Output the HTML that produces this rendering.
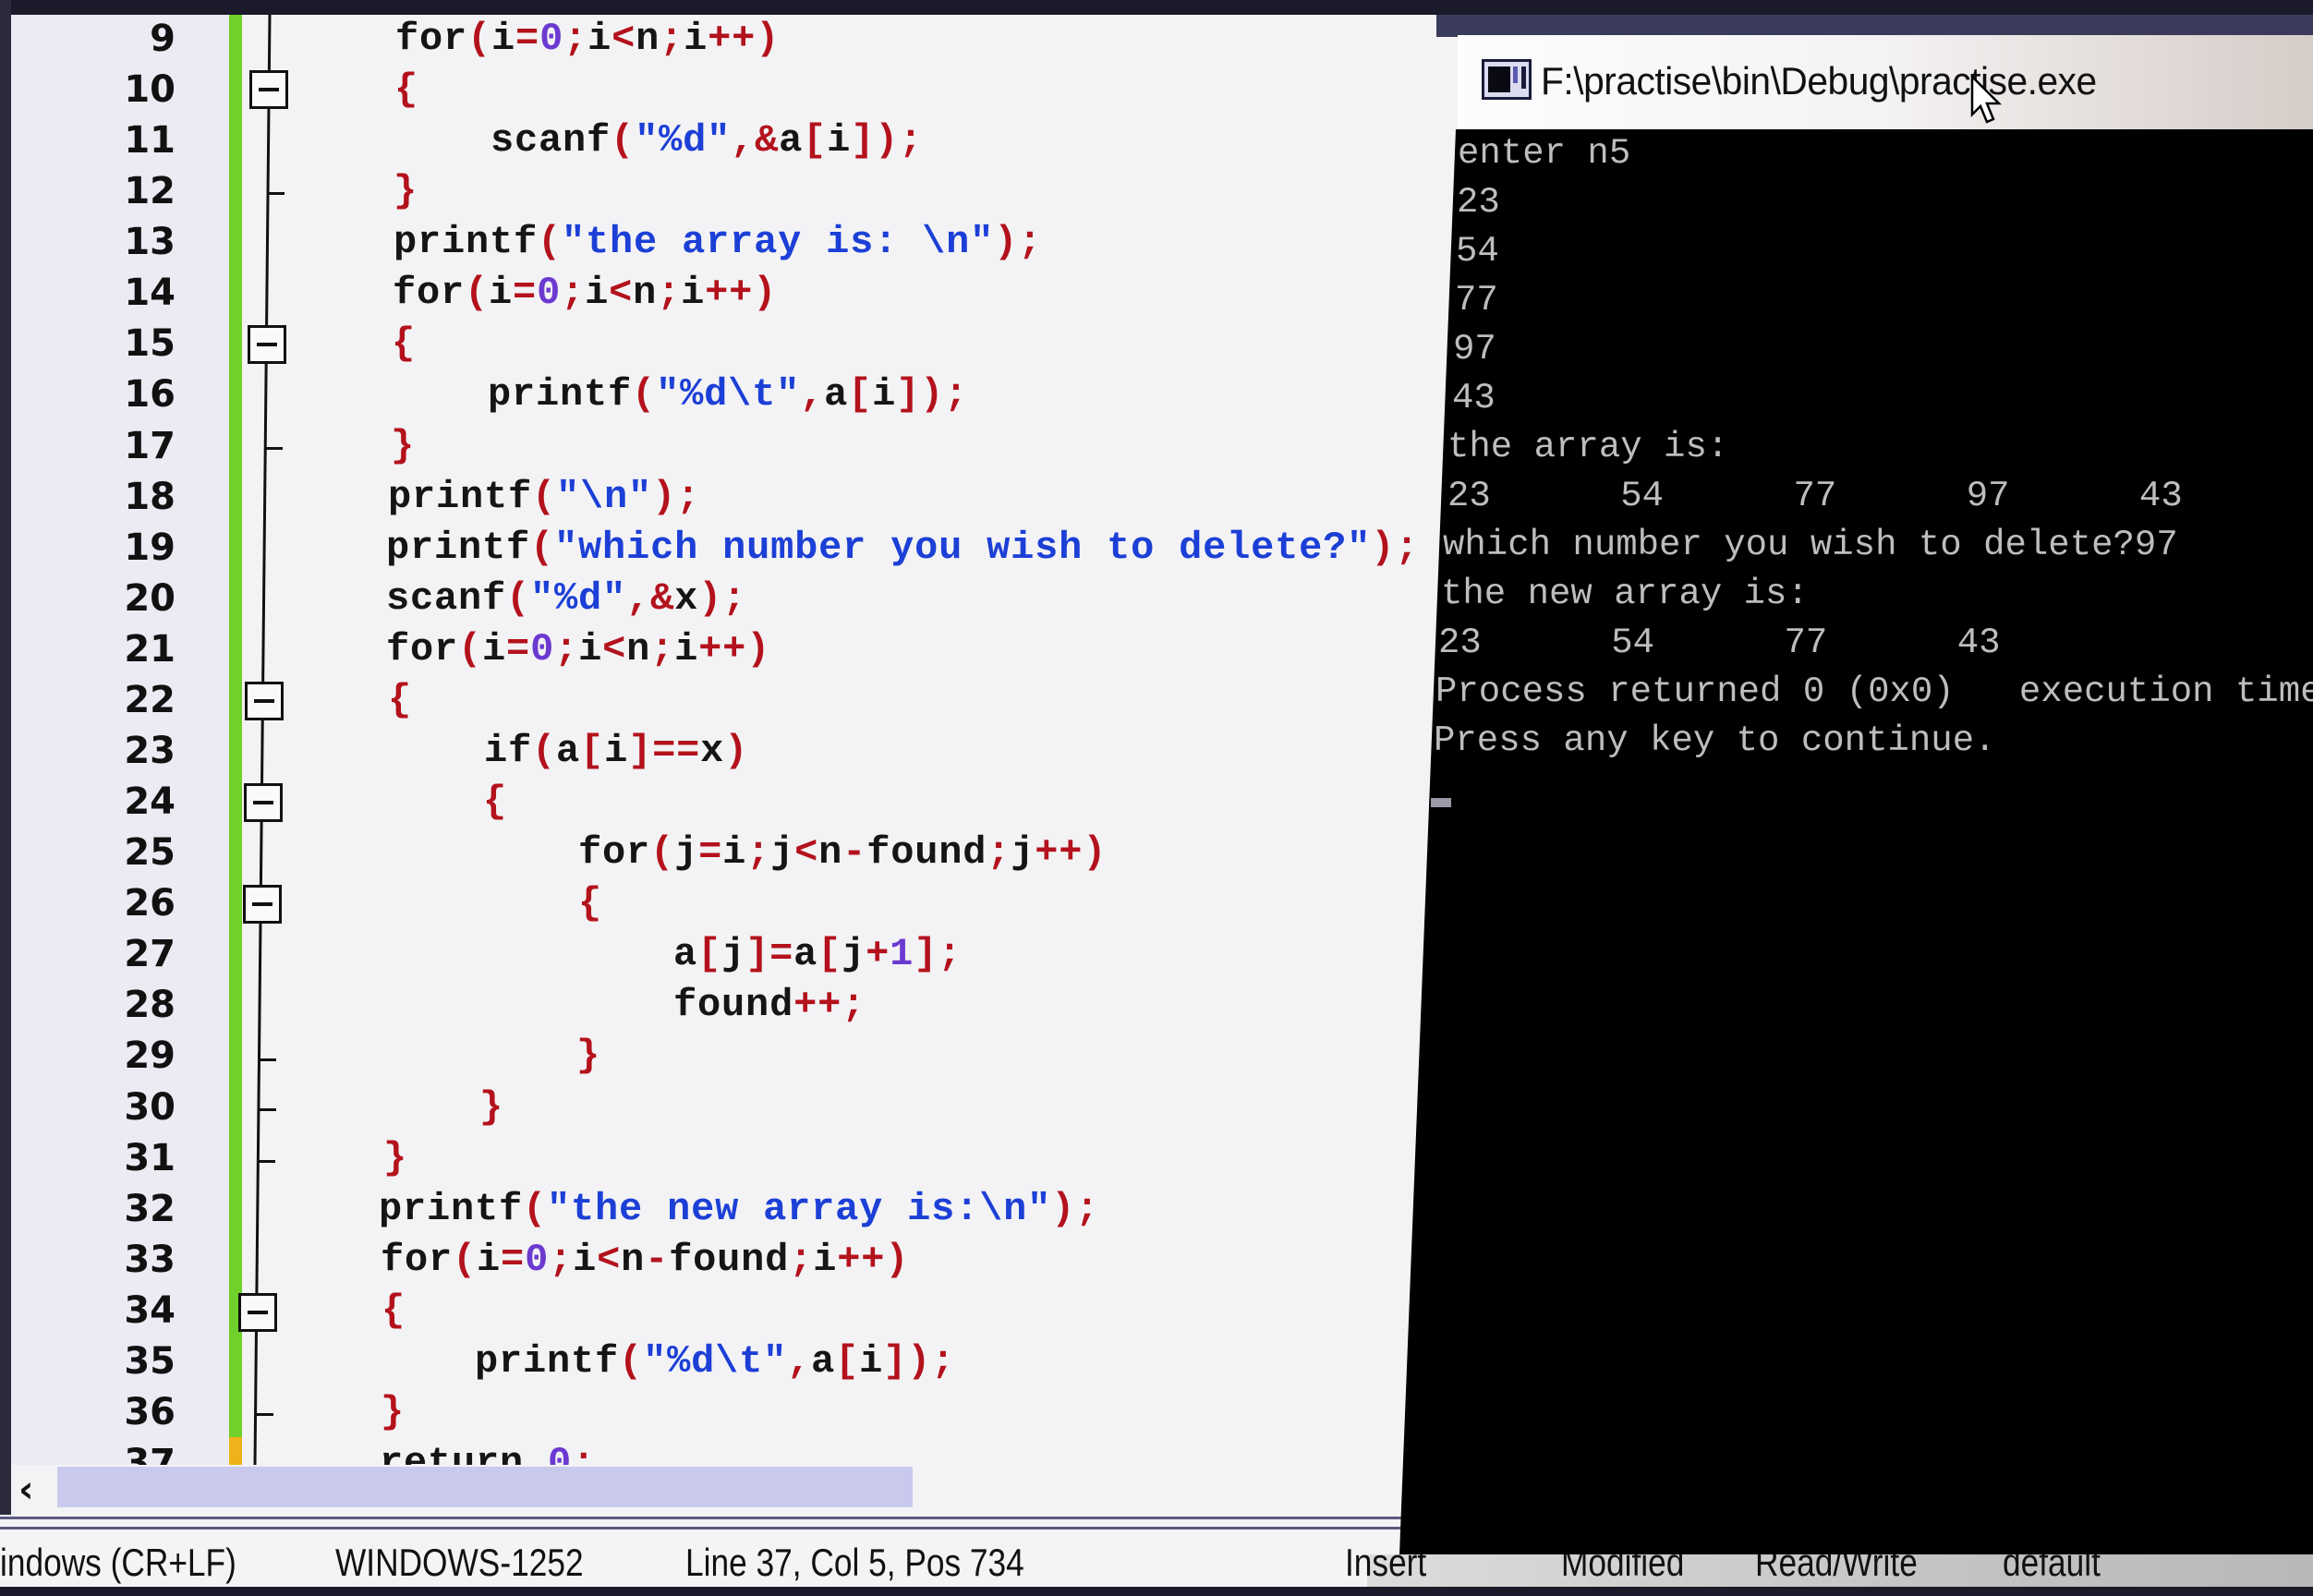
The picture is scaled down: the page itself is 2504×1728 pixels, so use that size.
<!DOCTYPE html>
<html><head><meta charset="utf-8">
<style>
*{margin:0;padding:0;box-sizing:border-box}
body{width:2504px;height:1728px;overflow:hidden;background:#f3f3f5;position:relative;font-family:"Liberation Mono",monospace}
.top{position:absolute;left:0;top:0;width:2504px;height:16px;background:#1a1a2a}
.leftb{position:absolute;left:0;top:0;width:12px;height:1640px;background:#2a2a3a}
.gutter{position:absolute;left:12px;top:16px;width:236px;height:1570px;background:#ecebf4}
.green{position:absolute;left:248px;top:16px;width:14px;height:1540px;background:#6fd12a}
.yellow{position:absolute;left:248px;top:1556px;width:14px;height:30px;background:#f0b21a}
.box{position:absolute;width:42px;height:42px;border:3px solid #111;background:#fafafa}
.box:after{content:"";position:absolute;left:7px;right:7px;top:16px;height:4px;background:#111}
.tick{position:absolute;width:18px;height:3px;background:#111}
.ln{position:absolute;left:60px;width:130px;text-align:right;font:bold 40px "DejaVu Sans",sans-serif;color:#111;line-height:55px}
.cl{position:absolute;white-space:pre;font-weight:bold;font-size:42px;letter-spacing:0.8px;line-height:55px;color:#151515}
.p{color:#b3121c}.s{color:#1c3fd6}.n{color:#6c3ad0}
.clip{position:absolute;left:0;top:16px;width:1540px;height:1570px;overflow:hidden}
.sb{position:absolute;left:62px;top:1588px;width:926px;height:44px;background:#c9c9ee}
.arrow{position:absolute;left:20px;top:1590px;font:bold 40px "DejaVu Sans",sans-serif;color:#111}
.hl{position:absolute;left:0;width:1520px;height:3px;background:#5a5a80}
.status{position:absolute;left:0;top:1658px;width:2504px;height:60px;background:#f4f4f6}
.status2{position:absolute;left:1480px;top:1683px;width:1024px;height:35px;background:linear-gradient(90deg,#dcdcdc,#c4c4c4 60%,#b8b8b8)}
.st{position:absolute;top:1668px;font:42px "Liberation Sans Narrow","Liberation Sans",sans-serif;color:#111;white-space:nowrap;transform:scaleX(0.84);transform-origin:left center}
.bot{position:absolute;left:0;top:1718px;width:2504px;height:10px;background:#1a1a2a}
.frame{position:absolute;left:1555px;top:16px;width:949px;height:24px;background:#3a3a5a}
.title{position:absolute;left:1578px;top:38px;width:926px;height:102px;background:linear-gradient(90deg,#fdfdfd,#f4f2f2 50%,#d6ccc8)}
.ttext{position:absolute;left:1668px;top:64px;font:42px "Liberation Sans Narrow","Liberation Sans",sans-serif;color:#111;letter-spacing:-0.5px;transform:scaleX(0.97);transform-origin:left center}
.con{position:absolute;left:1500px;top:140px;width:1004px;height:1543px;background:#000;clip-path:polygon(76px 0,1004px 0,1004px 1543px,15px 1543px)}
.ct{position:absolute;white-space:pre;font-size:39px;color:#bdbdbd;tab-size:8;-moz-tab-size:8;line-height:53px}
</style></head><body>
<div class="top"></div>
<div class="leftb"></div>
<div class="gutter"></div>
<div class="green"></div><div class="yellow"></div>
<svg style="position:absolute;left:0;top:0" width="400" height="1600"><line x1="292" y1="16" x2="276" y2="1586" stroke="#111" stroke-width="3"/></svg>
<div class="box" style="left:270px;top:76px"></div>
<div class="box" style="left:268px;top:352px"></div>
<div class="box" style="left:265px;top:738px"></div>
<div class="box" style="left:264px;top:848px"></div>
<div class="box" style="left:263px;top:958px"></div>
<div class="box" style="left:258px;top:1400px"></div>
<div class="tick" style="left:290px;top:208px"></div>
<div class="tick" style="left:288px;top:484px"></div>
<div class="tick" style="left:281px;top:1146px"></div>
<div class="tick" style="left:281px;top:1200px"></div>
<div class="tick" style="left:280px;top:1256px"></div>
<div class="tick" style="left:278px;top:1530px"></div>

<div class="clip">
<div class="ln" style="top:-1px">9</div>
<div class="ln" style="top:54px">10</div>
<div class="ln" style="top:109px">11</div>
<div class="ln" style="top:164px">12</div>
<div class="ln" style="top:219px">13</div>
<div class="ln" style="top:274px">14</div>
<div class="ln" style="top:329px">15</div>
<div class="ln" style="top:384px">16</div>
<div class="ln" style="top:440px">17</div>
<div class="ln" style="top:495px">18</div>
<div class="ln" style="top:550px">19</div>
<div class="ln" style="top:605px">20</div>
<div class="ln" style="top:660px">21</div>
<div class="ln" style="top:715px">22</div>
<div class="ln" style="top:770px">23</div>
<div class="ln" style="top:825px">24</div>
<div class="ln" style="top:880px">25</div>
<div class="ln" style="top:935px">26</div>
<div class="ln" style="top:990px">27</div>
<div class="ln" style="top:1045px">28</div>
<div class="ln" style="top:1100px">29</div>
<div class="ln" style="top:1156px">30</div>
<div class="ln" style="top:1211px">31</div>
<div class="ln" style="top:1266px">32</div>
<div class="ln" style="top:1321px">33</div>
<div class="ln" style="top:1376px">34</div>
<div class="ln" style="top:1431px">35</div>
<div class="ln" style="top:1486px">36</div>
<div class="ln" style="top:1541px">37</div>

<div class="cl" style="top:-1px;left:428px">for<span class="p">(</span>i<span class="p">=</span><span class="n">0</span><span class="p">;</span>i<span class="p">&lt;</span>n<span class="p">;</span>i<span class="p">++)</span></div>
<div class="cl" style="top:54px;left:427px"><span class="p">{</span></div>
<div class="cl" style="top:109px;left:427px">    scanf<span class="p">(</span><span class="s">"%d"</span><span class="p">,&amp;</span>a<span class="p">[</span>i<span class="p">]);</span></div>
<div class="cl" style="top:164px;left:426px"><span class="p">}</span></div>
<div class="cl" style="top:219px;left:426px">printf<span class="p">(</span><span class="s">"the array is: \n"</span><span class="p">);</span></div>
<div class="cl" style="top:274px;left:425px">for<span class="p">(</span>i<span class="p">=</span><span class="n">0</span><span class="p">;</span>i<span class="p">&lt;</span>n<span class="p">;</span>i<span class="p">++)</span></div>
<div class="cl" style="top:329px;left:424px"><span class="p">{</span></div>
<div class="cl" style="top:384px;left:424px">    printf<span class="p">(</span><span class="s">"%d\t"</span><span class="p">,</span>a<span class="p">[</span>i<span class="p">]);</span></div>
<div class="cl" style="top:440px;left:423px"><span class="p">}</span></div>
<div class="cl" style="top:495px;left:420px">printf<span class="p">(</span><span class="s">"\n"</span><span class="p">);</span></div>
<div class="cl" style="top:550px;left:418px">printf<span class="p">(</span><span class="s">"which number you wish to delete?"</span><span class="p">);</span></div>
<div class="cl" style="top:605px;left:418px">scanf<span class="p">(</span><span class="s">"%d"</span><span class="p">,&amp;</span>x<span class="p">);</span></div>
<div class="cl" style="top:660px;left:418px">for<span class="p">(</span>i<span class="p">=</span><span class="n">0</span><span class="p">;</span>i<span class="p">&lt;</span>n<span class="p">;</span>i<span class="p">++)</span></div>
<div class="cl" style="top:715px;left:420px"><span class="p">{</span></div>
<div class="cl" style="top:770px;left:420px">    if<span class="p">(</span>a<span class="p">[</span>i<span class="p">]==</span>x<span class="p">)</span></div>
<div class="cl" style="top:825px;left:419px">    <span class="p">{</span></div>
<div class="cl" style="top:880px;left:418px">        for<span class="p">(</span>j<span class="p">=</span>i<span class="p">;</span>j<span class="p">&lt;</span>n<span class="p">-</span>found<span class="p">;</span>j<span class="p">++)</span></div>
<div class="cl" style="top:935px;left:418px">        <span class="p">{</span></div>
<div class="cl" style="top:990px;left:417px">            a<span class="p">[</span>j<span class="p">]=</span>a<span class="p">[</span>j<span class="p">+</span><span class="n">1</span><span class="p">];</span></div>
<div class="cl" style="top:1045px;left:417px">            found<span class="p">++;</span></div>
<div class="cl" style="top:1100px;left:416px">        <span class="p">}</span></div>
<div class="cl" style="top:1156px;left:415px">    <span class="p">}</span></div>
<div class="cl" style="top:1211px;left:415px"><span class="p">}</span></div>
<div class="cl" style="top:1266px;left:410px">printf<span class="p">(</span><span class="s">"the new array is:\n"</span><span class="p">);</span></div>
<div class="cl" style="top:1321px;left:412px">for<span class="p">(</span>i<span class="p">=</span><span class="n">0</span><span class="p">;</span>i<span class="p">&lt;</span>n<span class="p">-</span>found<span class="p">;</span>i<span class="p">++)</span></div>
<div class="cl" style="top:1376px;left:413px"><span class="p">{</span></div>
<div class="cl" style="top:1431px;left:410px">    printf<span class="p">(</span><span class="s">"%d\t"</span><span class="p">,</span>a<span class="p">[</span>i<span class="p">]);</span></div>
<div class="cl" style="top:1486px;left:412px"><span class="p">}</span></div>
<div class="cl" style="top:1541px;left:411px">return <span class="n">0</span><span class="p">;</span></div>
</div>

<div class="sb"></div>
<div class="arrow">&lsaquo;</div>
<div class="hl" style="top:1642px"></div>
<div class="hl" style="top:1653px"></div>

<div class="status"></div>
<div class="status2"></div>
<div class="st" style="left:0">indows (CR+LF)</div>
<div class="st" style="left:363px">WINDOWS-1252</div>
<div class="st" style="left:742px">Line 37, Col 5, Pos 734</div>
<div class="st" style="left:1456px">Insert</div>
<div class="st" style="left:1690px">Modified</div>
<div class="st" style="left:1900px">Read/Write</div>
<div class="st" style="left:2168px">default</div>
<div class="bot"></div>

<div class="frame"></div>
<div class="title"></div>
<svg style="position:absolute;left:1604px;top:64px" width="54" height="44" viewBox="0 0 54 44">
<rect x="1.5" y="1.5" width="51" height="41" fill="#dcdcf0" stroke="#1a1a3a" stroke-width="3"/>
<rect x="7" y="8" width="24" height="28" fill="#0a0a14"/>
<rect x="34" y="8" width="5" height="18" fill="#5a5ab0"/>
<rect x="43" y="8" width="5" height="24" fill="#1a1a3a"/>
</svg>
<div class="ttext">F:\practise\bin\Debug\practise.exe</div>
<svg style="position:absolute;left:2132px;top:80px" width="36" height="56" viewBox="0 0 36 56">
<path d="M3 3 L3 44 L12 35 L19 52 L26 49 L19 32 L32 32 Z" fill="#fff" stroke="#000" stroke-width="2.5"/>
</svg>

<div class="con"></div>
<div class="ct" style="left:1578px;top:140px">enter n5</div>
<div class="ct" style="left:1577px;top:193px">23</div>
<div class="ct" style="left:1576px;top:246px">54</div>
<div class="ct" style="left:1575px;top:299px">77</div>
<div class="ct" style="left:1573px;top:352px">97</div>
<div class="ct" style="left:1572px;top:405px">43</div>
<div class="ct" style="left:1567px;top:458px">the array is:</div>
<div class="ct" style="left:1567px;top:511px">23	54	77	97	43</div>
<div class="ct" style="left:1562px;top:564px">which number you wish to delete?97</div>
<div class="ct" style="left:1560px;top:617px">the new array is:</div>
<div class="ct" style="left:1557px;top:670px">23	54	77	43</div>
<div class="ct" style="left:1554px;top:723px">Process returned 0 (0x0)   execution time</div>
<div class="ct" style="left:1552px;top:776px">Press any key to continue.</div>
<div style="position:absolute;left:1549px;top:864px;width:22px;height:10px;background:#9a9aa8"></div>
</body></html>
